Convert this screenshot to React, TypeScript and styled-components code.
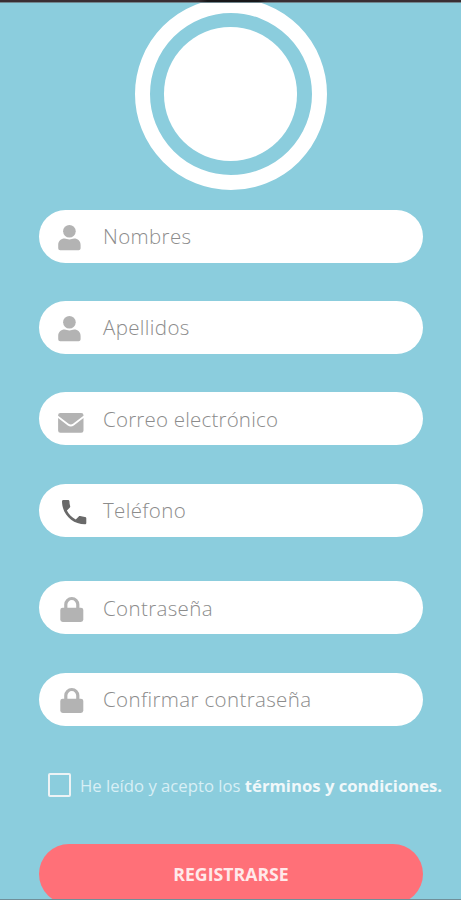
import React from "react";
import styled, { createGlobalStyle } from "styled-components";

const GlobalStyle = createGlobalStyle`
  * { box-sizing: border-box; }
  body { margin: 0; background: #8bcddd; }
`;

const Screen = styled.main`
  display: flex;
  flex-direction: column;
  width: 461px;
  height: 900px;
  overflow: hidden;
  background: #8bcddd;
  font-family: "Open Sans", "Noto Sans", sans-serif;
  border-bottom: 1px solid #708f99;
`;

const TopEdge = styled.div`
  flex: none;
  height: 3px;
  z-index: 1;
  background: linear-gradient(90deg, #3a2e33 43%, #171719 45%, #171719 56%, #3a2e33 58%);
  border-bottom: 1px solid #71868e;
`;

const AvatarRing = styled.div`
  flex: none;
  display: grid;
  place-items: center;
  width: 192.6px;
  height: 192.6px;
  margin: -5.4px 0 0 134.5px;
  border: 15px solid #fff;
  border-radius: 50%;
`;

const AvatarDisc = styled.div`
  width: 133.4px;
  height: 133.4px;
  border-radius: 50%;
  background: #fff;
`;

const Form = styled.form`
  display: flex;
  flex-direction: column;
  width: 384px;
  margin: 19.3px 0 0 39px;
`;

const Field = styled.label<{ $gap?: number }>`
  flex: none;
  display: flex;
  align-items: center;
  height: 53px;
  margin-bottom: ${({ $gap = 38.4 }) => $gap}px;
  border-radius: 27px;
  background: #fff;
`;

const IconSlot = styled.span`
  flex: none;
  display: flex;
  width: 64px;
  padding-left: 17px;
`;

const FieldText = styled.span<{ $spacing?: number }>`
  color: #8c8c8c;
  font-size: 20.5px;
  font-weight: 300;
  line-height: 28px;
  letter-spacing: ${({ $spacing = 0.36 }) => $spacing}px;
  white-space: nowrap;
`;

const Terms = styled.div`
  flex: none;
  display: flex;
  align-items: center;
  height: 26px;
  margin: 8px -30px 0 9px;
`;

const CheckBox = styled.span`
  flex: none;
  width: 23px;
  height: 24px;
  margin-right: 9px;
  border: 2px solid #edf3f5;
  border-radius: 2px;
`;

const TermsText = styled.span`
  padding-top: 2px;
  color: #d8eff5;
  font-size: 16.7px;
  font-weight: 400;
  line-height: 24px;
  white-space: nowrap;
`;

const TermsLink = styled.strong`
  color: #f0f8fa;
  font-weight: 700;
`;

const Submit = styled.button`
  flex: none;
  height: 60px;
  margin-top: 45.7px;
  padding: 0;
  border: 0;
  border-radius: 30px;
  background: #ff7078;
  color: #ffe9ea;
  font: 700 17.7px/24px "Open Sans", "Noto Sans", sans-serif;
`;

const iconSize = { width: 40, height: 36, viewBox: "0 0 40 36" };

const UserIcon = () => (
  <svg {...iconSize} fill="#b3b3b3">
    <circle cx="13.4" cy="13.2" r="6.3" />
    <path d="M2.2 30.2v-3.2c0-3.7 2.8-6.4 6.4-6.4 1.8 0 2.8.8 4.8.8s3-.8 4.8-.8c3.6 0 6.4 2.7 6.4 6.4v3.2c0 1.1-.9 2-2 2H4.2a2 2 0 0 1-2-2Z" />
  </svg>
);

const MailIcon = () => (
  <svg {...iconSize} fill="#b3b3b3">
    <g transform="translate(0 1)">
      <path d="M4.4 10.9h20.8a2.3 2.3 0 0 1 2.3 2.3v.5L17 21.8c-1.4 1-3 1-4.4 0L2.1 13.7v-.5a2.3 2.3 0 0 1 2.3-2.3Z" />
      <path d="M2.1 16.1 11.8 23.6c1.8 1.3 4.2 1.3 6 0l9.7-7.5v12.3a2.3 2.3 0 0 1-2.3 2.3H4.4a2.3 2.3 0 0 1-2.3-2.3Z" />
    </g>
  </svg>
);

const PhoneIcon = () => (
  <svg {...iconSize} fill="#696969">
    <path
      transform="translate(1.95 3.95) scale(1.35)"
      d="M6.62 10.79c1.44 2.83 3.76 5.14 6.59 6.59l2.2-2.2c.27-.27.67-.36 1.02-.24 1.12.37 2.33.57 3.57.57.55 0 1 .45 1 1V20c0 .55-.45 1-1 1-9.39 0-17-7.61-17-17 0-.55.45-1 1-1h3.5c.55 0 1 .45 1 1 0 1.25.2 2.45.57 3.57.11.35.03.74-.25 1.02l-2.2 2.2z"
    />
  </svg>
);

const LockIcon = () => (
  <svg {...iconSize}>
    <path d="M9.8 19v-4.5a6 6 0 0 1 12 0V19" fill="none" stroke="#b3b3b3" strokeWidth="3.2" />
    <rect x="4.3" y="17.7" width="23" height="14.3" rx="2.4" fill="#b3b3b3" />
  </svg>
);

const fields = [
  { label: "Nombres", Icon: UserIcon },
  { label: "Apellidos", Icon: UserIcon },
  { label: "Correo electrónico", Icon: MailIcon, spacing: 0.2 },
  { label: "Teléfono", Icon: PhoneIcon, gap: 44.6 },
  { label: "Contraseña", Icon: LockIcon },
  { label: "Confirmar contraseña", Icon: LockIcon },
];

export default function App() {
  return (
    <>
      <GlobalStyle />
      <Screen>
        <TopEdge />
        <AvatarRing>
          <AvatarDisc />
        </AvatarRing>
        <Form>
          {fields.map(({ label, Icon, gap, spacing }) => (
            <Field key={label} $gap={gap}>
              <IconSlot>
                <Icon />
              </IconSlot>
              <FieldText $spacing={spacing}>{label}</FieldText>
            </Field>
          ))}
          <Terms>
            <CheckBox role="checkbox" aria-checked="false" />
            <TermsText>
              He leído y acepto los <TermsLink>términos y condiciones.</TermsLink>
            </TermsText>
          </Terms>
          <Submit type="button">REGISTRARSE</Submit>
        </Form>
      </Screen>
    </>
  );
}
